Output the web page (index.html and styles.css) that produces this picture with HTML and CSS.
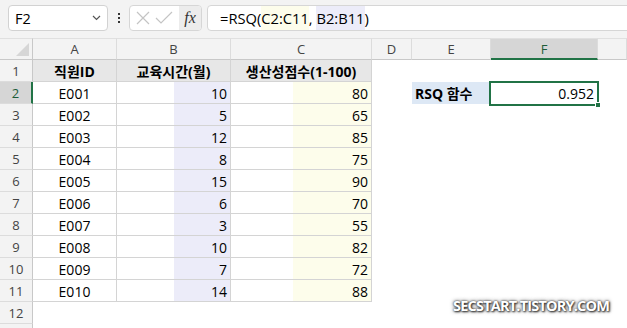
FILE: index.html
```html
<!DOCTYPE html>
<html lang="ko">
<head>
  <meta charset="UTF-8">
  <title>RSQ 함수</title>
  <link rel="stylesheet" href="styles.css">
</head>
<body>
  <!-- formula bar -->
  <div class="bar">
    <div class="namebox">
      <span>F2</span>
      <svg width="9" height="6" viewBox="0 0 9 6"><path d="M1 1 L4.5 4.5 L8 1" fill="none" stroke="#555" stroke-width="1.2"/></svg>
    </div>
    <div class="dots"><i></i><i></i><i></i></div>
    <div class="fxbox">
      <svg class="btn" width="16" height="14" viewBox="0 0 16 14"><path d="M2 1 L14 13 M14 1 L2 13" stroke="#c4c4c4" stroke-width="1.2" fill="none"/></svg>
      <svg class="btn" width="18" height="14" viewBox="0 0 18 14"><path d="M1 7 L6 12 L17 1" stroke="#c4c4c4" stroke-width="1.2" fill="none"/></svg>
      <span class="fx">fx</span>
    </div>
    <div class="formula">=RSQ(<span class="ref-c">C2:C11</span>, <span class="ref-b">B2:B11</span>)</div>
  </div>

  <!-- sheet grid -->
  <div class="sheet">
    <div class="corner"><span></span></div>
    <div class="colh">A</div><div class="colh">B</div><div class="colh">C</div><div class="colh">D</div>
    <div class="colh">E</div><div class="colh sel">F</div><div class="colh"></div>

    <div class="rowh">1</div>
    <div class="c hd">직원ID</div><div class="c hd">교육시간(월)</div><div class="c hd">생산성점수(1-100)</div>
    <div></div><div></div><div></div><div></div>

    <div class="rowh sel">2</div>
    <div class="c id">E001</div><div class="c num rb">10</div><div class="c num rc">80</div>
    <div></div><div class="label">RSQ 함수</div><div class="result">0.952<span class="pick"><i></i></span></div><div></div>

    <div class="rowh">3</div>
    <div class="c id">E002</div><div class="c num rb">5</div><div class="c num rc">65</div>
    <div></div><div></div><div></div><div></div>

    <div class="rowh">4</div>
    <div class="c id">E003</div><div class="c num rb">12</div><div class="c num rc">85</div>
    <div></div><div></div><div></div><div></div>

    <div class="rowh">5</div>
    <div class="c id">E004</div><div class="c num rb">8</div><div class="c num rc">75</div>
    <div></div><div></div><div></div><div></div>

    <div class="rowh">6</div>
    <div class="c id">E005</div><div class="c num rb">15</div><div class="c num rc">90</div>
    <div></div><div></div><div></div><div></div>

    <div class="rowh">7</div>
    <div class="c id">E006</div><div class="c num rb">6</div><div class="c num rc">70</div>
    <div></div><div></div><div></div><div></div>

    <div class="rowh">8</div>
    <div class="c id">E007</div><div class="c num rb">3</div><div class="c num rc">55</div>
    <div></div><div></div><div></div><div></div>

    <div class="rowh">9</div>
    <div class="c id">E008</div><div class="c num rb">10</div><div class="c num rc">82</div>
    <div></div><div></div><div></div><div></div>

    <div class="rowh">10</div>
    <div class="c id">E009</div><div class="c num rb">7</div><div class="c num rc">72</div>
    <div></div><div></div><div></div><div></div>

    <div class="rowh">11</div>
    <div class="c id">E010</div><div class="c num rb">14</div><div class="c num rc">88</div>
    <div></div><div></div><div></div><div></div>

    <div class="rowh">12</div>
    <div></div><div></div><div></div><div></div><div></div><div></div><div></div>

    <div class="rowh"></div>
  </div>

  <div class="watermark">SECSTART.TISTORY.COM</div>
</body>
</html>
```

FILE: styles.css
```css
:root {
  --grid: #d4d4d4;
  --head: #f3f3f3;
  --green: #217346;
  --text: #000;
  --muted: #444;
}
* { box-sizing: border-box; margin: 0; padding: 0; }
body {
  font-family: "Open Sans", "Noto Sans CJK KR", sans-serif;
  background: #fff; color: var(--text);
  width: 627px; height: 328px; overflow: hidden;
  position: relative;
}

/* formula bar */
.bar {
  height: 38px; background: var(--head);
  display: flex; align-items: flex-start;
  padding: 5px 0 0 8px;
}
.namebox {
  width: 100px; height: 26px; background: #fff;
  border: 1px solid #d2d2d2; border-radius: 4px;
  display: flex; align-items: center; justify-content: space-between;
  padding: 0 6px 0 6px; font-size: 14.5px;
}
.dots {
  width: 21px; height: 26px;
  display: flex; flex-direction: column; align-items: center; justify-content: center; gap: 2px;
}
.dots i { display: block; width: 2px; height: 2px; background: #333; }
.fxbox {
  width: 73px; height: 26px; background: #fff;
  border: 1px solid #d6d6d6; border-radius: 4px;
  display: flex; align-items: center; padding-left: 5px;
}
.fxbox .btn { margin-right: 4px; }
.fx {
  margin-left: auto; width: 22px; height: 24px; background: #ececec;
  border-radius: 0 3px 3px 0;
  font-family: "Liberation Serif", serif; font-style: italic; font-size: 16px;
  display: flex; align-items: center; justify-content: center;
  color: #333;
}
.formula {
  flex: 1; margin: 0 -10px 0 5px; height: 26px; background: #fff;
  border: 1px solid #d6d6d6; border-radius: 4px;
  padding-left: 12px; font-size: 14.7px; line-height: 24px; white-space: nowrap;
}
.ref-c { background: #fdfdeb; display: inline-block; }
.ref-b { background: #ececf9; display: inline-block; }

/* sheet */
.sheet {
  display: grid;
  grid-template-columns: 33px 84px 114px 141px 40px 79px 107px 1fr;
  grid-auto-rows: 22px;
  height: 290px; overflow: hidden;
  font-size: 14px;
}
.corner {
  background: var(--head); border-right: 1px solid #c8c8c8; border-bottom: 1px solid #c8c8c8;
  border-top: 1px solid #e0e0e0;
  display: flex; align-items: flex-end; justify-content: flex-end; padding: 0 3px 3px 0;
}
.corner span {
  width: 0; height: 0;
  border-left: 13px solid transparent; border-bottom: 13px solid #d6d6d6;
}
.colh {
  background: var(--head); color: var(--muted);
  border-right: 1px solid #dcdcdc; border-bottom: 1px solid #c8c8c8; border-top: 1px solid #e0e0e0;
  text-align: center; font-size: 13px; line-height: 20px;
}
.colh.sel { background: #d6d6d6; border-bottom: 2px solid var(--green); color: #1d5c38; }
.rowh {
  background: var(--head); color: var(--muted);
  border-right: 1px solid #c8c8c8; border-bottom: 1px solid #dcdcdc;
  text-align: center; font-size: 13px; line-height: 22px;
}
.rowh.sel { background: #d6d6d6; border-right: 2px solid var(--green); color: #1d5c38; }

.c {
  border-right: 1px solid var(--grid); border-bottom: 1px solid var(--grid);
  line-height: 22px; padding-top: 1px; white-space: nowrap; overflow: hidden;
}
.hd { background: #e7e7e7; font-weight: 700; text-align: center; }
.id { text-align: center; }
.num { text-align: right; padding-right: 3px; }
.rb { background: linear-gradient(to right, #fff 57px, #ececf9 57px); }
.rc { background: linear-gradient(to right, #fff 62px, #fdfdeb 62px); }

.label {
  background: #dde8f5; font-weight: 700;
  padding-left: 3px; line-height: 22px; padding-top: 1px;
}
.result {
  position: relative; text-align: right; padding-right: 4px;
  line-height: 22px; padding-top: 1px;
}
.pick {
  position: absolute; top: -1px; left: -2px; right: -1px; bottom: -2px;
  border: 2px solid var(--green);
}
.pick i {
  position: absolute; right: -4px; bottom: -4px;
  width: 6px; height: 6px; background: var(--green); border: 1px solid #fff;
}

.watermark {
  position: absolute; left: 453px; top: 296px;
  font-family: "Open Sans", sans-serif; font-weight: 700; font-size: 14.5px;
  color: #fff; letter-spacing: -0.8px;
  text-shadow: 0 0 2px #333, 1px 1px 2px #333, 0 0 4px #666;
}
```
